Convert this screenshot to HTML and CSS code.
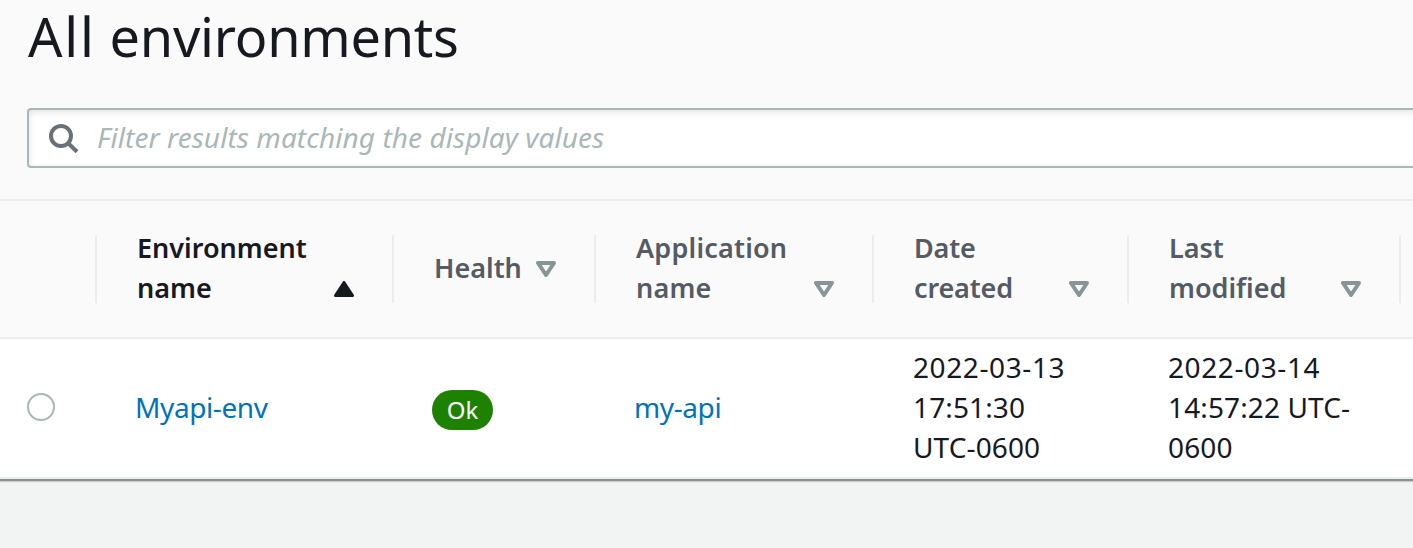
FILE: index.html
```html
<!DOCTYPE html>
<html lang="en">
<head>
<meta charset="utf-8">
<title>All environments</title>
<link rel="stylesheet" href="styles.css">
</head>
<body>
<main class="panel">
  <header class="panel-header">
    <h1 class="title"><span class="title-lead">All</span> environments</h1>
    <div class="search">
      <svg class="search-icon" width="32" height="32" viewBox="0 0 32 32"><circle cx="13" cy="13" r="10" fill="none" stroke="#687078" stroke-width="4"/><path d="M20 20l9 8.8" fill="none" stroke="#687078" stroke-width="4"/></svg>
      <span class="placeholder">Filter results matching the display values</span>
    </div>
  </header>
  <div class="row head">
    <div class="th"></div>
    <div class="th sorted"><span class="label">Environment<br>name</span><svg class="sort" width="20" height="16" viewBox="0 0 20 16"><path d="M10 1.5L18.5 14.5H1.5Z" fill="#16191f" stroke="#16191f" stroke-width="3" stroke-linejoin="round"/></svg></div>
    <div class="th single"><span class="label">Health</span><svg class="sort" width="20" height="16" viewBox="0 0 20 16"><path d="M2 2H18L10 14Z" fill="none" stroke="#879596" stroke-width="4" stroke-linejoin="round"/></svg></div>
    <div class="th"><span class="label app">Application<br>name</span><svg class="sort" width="20" height="16" viewBox="0 0 20 16"><path d="M2 2H18L10 14Z" fill="none" stroke="#879596" stroke-width="4" stroke-linejoin="round"/></svg></div>
    <div class="th"><span class="label created">Date<br>created</span><svg class="sort" width="20" height="16" viewBox="0 0 20 16"><path d="M2 2H18L10 14Z" fill="none" stroke="#879596" stroke-width="4" stroke-linejoin="round"/></svg></div>
    <div class="th"><span class="label">Last<br>modified</span><svg class="sort" width="20" height="16" viewBox="0 0 20 16"><path d="M2 2H18L10 14Z" fill="none" stroke="#879596" stroke-width="4" stroke-linejoin="round"/></svg></div>
  </div>
  <div class="row body">
    <div class="td pick"><span class="radio"></span></div>
    <div class="td"><a class="link">Myapi-env</a></div>
    <div class="td"><span class="badge">Ok</span></div>
    <div class="td"><a class="link">my-api</a></div>
    <div class="td when"><span class="time"><span class="day">2022-03-13</span><br>17:51:30<br>UTC-0600</span></div>
    <div class="td when"><span class="time"><span class="day">2022-03-14</span><br>14:57:22 UTC-<br>0600</span></div>
  </div>
</main>
</body>
</html>
```
FILE: styles.css
```css
* { box-sizing: border-box; }
body {
  margin: 0;
  height: 548px;
  overflow: hidden;
  background: #f2f3f3;
  color: #16191f;
  font: 28px/40px "Noto Sans", "Open Sans", sans-serif;
}
.panel {
  background: #fafafa;
  border-bottom: 2px solid #879196;
  box-shadow: 0 1px 1px #c9cdce;
}
.panel-header {
  height: 201px;
  padding-left: 27px;
  border-bottom: 2px solid #eaeded;
  overflow: hidden;
}
.title {
  margin: 0;
  height: 108px;
  padding-left: 1px;
  font-size: 54px;
  font-weight: 400;
  line-height: 72px;
  letter-spacing: -.25px;
}
.title-lead { letter-spacing: 1.8px; }
.search {
  display: flex;
  align-items: center;
  width: 1420px;
  height: 60px;
  padding-left: 19px;
  border: 2px solid #aab7b8;
  border-radius: 4px;
  background: #fff;
  box-shadow: inset 0 2px 6px rgba(0, 0, 0, .12);
}
.search-icon { flex: none; margin-top: 2px; }
.placeholder {
  margin: 0 0 2px 17px;
  color: #aab7b8;
  font-style: italic;
  letter-spacing: .07px;
  white-space: nowrap;
}
.row {
  display: grid;
  grid-template-columns: 97px 297px 202px 278px 255px 272px;
}
.head {
  height: 138px;
  padding: 34px 0;
  border-bottom: 2px solid #eaeded;
}
.th {
  display: flex;
  align-items: center;
  justify-content: space-between;
  height: 68px;
  padding: 0 38px 0 40px;
  border-right: 2px solid #eaeded;
  color: #545b64;
  font-size: 27px;
  font-weight: 600;
}
.sorted { color: #16191f; }
.label { margin-bottom: 2px; white-space: nowrap; }
.app { letter-spacing: .2px; }
.created { letter-spacing: -.15px; }
.sort { flex: none; margin-top: 40px; }
.single .sort { margin-top: 0; }
.body {
  height: 140px;
  background: #fff;
  border-bottom: 2px solid #eaeded;
}
.td {
  display: flex;
  align-items: center;
  padding: 0 0 2px 38px;
  white-space: nowrap;
}
.when { padding-left: 39px; }
.time { letter-spacing: .12px; }
.day { letter-spacing: .6px; }
.pick { padding-left: 27px; }
.radio {
  width: 28px;
  height: 28px;
  border: 2px solid #aab7b8;
  border-radius: 50%;
}
.link { color: #0073bb; letter-spacing: -.4px; }
.badge {
  width: 61px;
  height: 40px;
  margin-top: 6px;
  border-radius: 20px;
  background: #1d8102;
  color: #fff;
  font-size: 24px;
  line-height: 39px;
  text-align: center;
}
```
